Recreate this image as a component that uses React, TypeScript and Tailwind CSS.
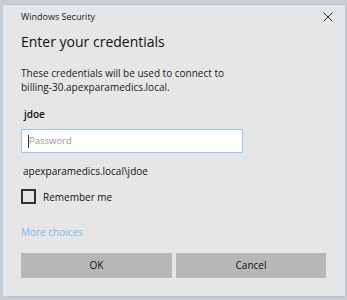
export default function App() {
  return (
    <div className="w-[347px] h-[300px] bg-[#cccccc] pt-[4px] pl-[2px] font-['Open_Sans',sans-serif]">
      <div className="w-[344px] h-[293px] border border-[#a9cbee] bg-[#e6e6e6] flex flex-col px-[18px] pt-[5px]">
        <div className="flex items-center justify-between h-[14px] leading-[14px]">
          <span className="text-[9px] text-[#1a1a1a]">Windows Security</span>
          <svg width="10" height="10" viewBox="0 0 10 10" className="mr-[-6px]">
            <path d="M0.5 0.5 L9.5 9.5 M9.5 0.5 L0.5 9.5" stroke="#333" strokeWidth="1" />
          </svg>
        </div>
        <h1 className="text-[14px] leading-[20px] text-[#111] mt-[8px]">Enter your credentials</h1>
        <p className="text-[10px] leading-[14px] text-[#1a1a1a] mt-[14px]">
          These credentials will be used to connect to
          <br />
          billing-30.apexparamedics.local.
        </p>
        <div className="text-[10px] leading-[14px] font-semibold text-[#111] mt-[13px] ml-[3px]">jdoe</div>
        <div className="mt-[8px] w-[222px] h-[24px] border border-[#99c8f7] bg-white flex items-center pl-[6px]">
          <span className="w-px h-[13px] bg-[#333]" />
          <span className="text-[9.5px] text-[#9a9a9a]">Password</span>
        </div>
        <div className="text-[10px] leading-[14px] text-[#111] mt-[11px] ml-[2px]">apexparamedics.local\jdoe</div>
        <label className="flex items-center gap-[7px] mt-[11px] h-[15px]">
          <span className="w-[15px] h-[15px] border-2 border-[#333] bg-[#e6e6e6]" />
          <span className="text-[10px] leading-[14px] text-[#111]">Remember me</span>
        </label>
        <div className="text-[10px] leading-[14px] text-[#80b6ee] mt-[21px]">More choices</div>
        <div className="flex gap-[4px] mt-[14px]">
          <button className="w-[151px] h-[25px] bg-[#b7b7b7] text-[10px] text-[#111]">OK</button>
          <button className="w-[150px] h-[25px] bg-[#b7b7b7] text-[10px] text-[#111]">Cancel</button>
        </div>
      </div>
    </div>
  );
}
